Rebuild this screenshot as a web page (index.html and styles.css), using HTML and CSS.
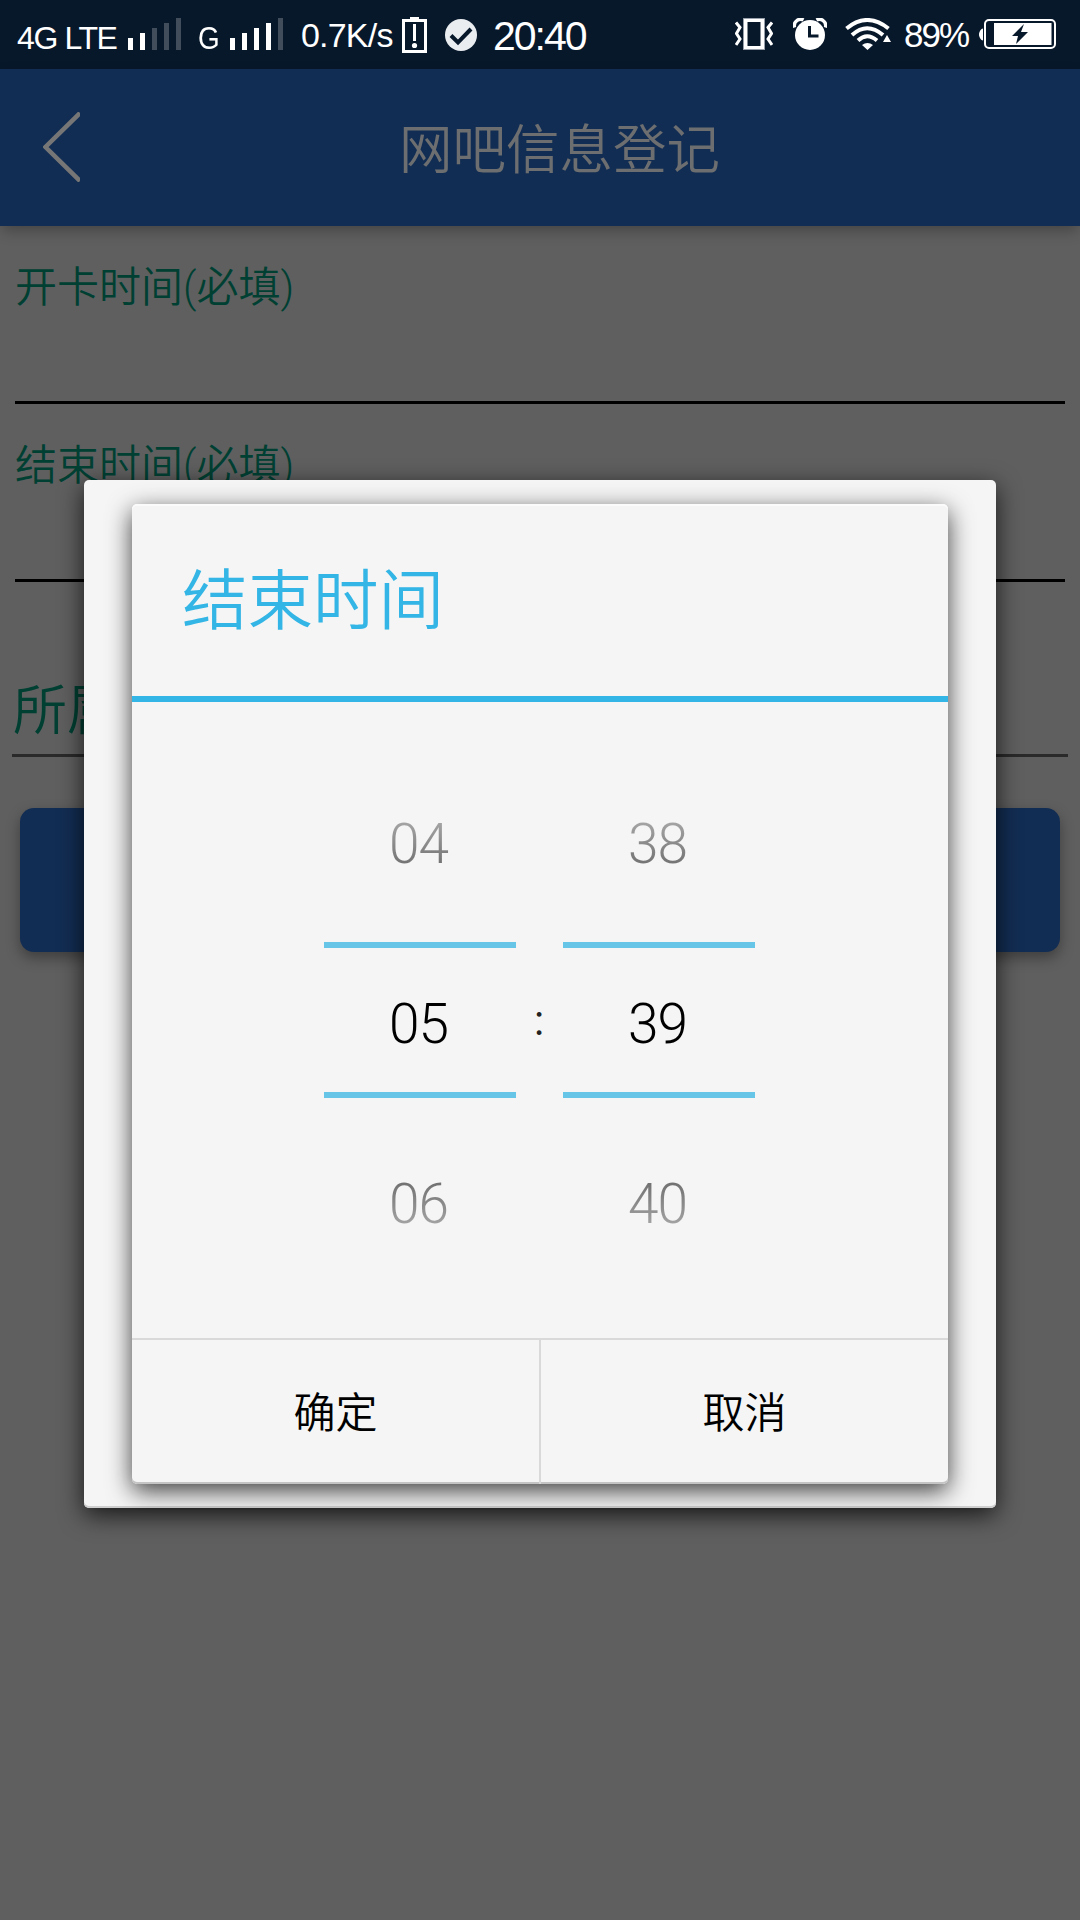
FILE: index.html
```html
<!DOCTYPE html>
<html lang="zh-CN">
<head>
<meta charset="utf-8">
<title>网吧信息登记</title>
<link rel="stylesheet" href="styles.css">
</head>
<body>
<div class="screen">
  <div class="status">
    <span class="net lte">4G LTE</span>
    <svg class="sig1" width="54" height="32" viewBox="0 0 54 32"><path fill="#fff" d="M0 20h5v12H0zM12 15h5v17h-5z"/><path fill="#414d5b" d="M24 10h5v22h-5zM36 5h5v27h-5zM48 0h5v32h-5z"/></svg>
    <span class="net gsm">G</span>
    <svg class="sig2" width="54" height="32" viewBox="0 0 54 32"><path fill="#fff" d="M0 20h5v12H0zM12 15h5v17h-5zM24 10h5v22h-5zM36 5h5v27h-5z"/><path fill="#414d5b" d="M48 0h5v32h-5z"/></svg>
    <span class="speed">0.7K/s</span>
    <svg class="sim" width="25" height="36" viewBox="0 0 25 36"><path fill="#fff" fill-rule="evenodd" d="M8 0h9v2h8v34H0V2h8zM3 5v28h19V5zM11 7h3v17h-3z"/><circle cx="12.500" cy="28.500" r="2.600" fill="#fff"/></svg>
    <svg class="check" width="32" height="32" viewBox="0 0 32 32"><circle cx="16" cy="16" r="16" fill="#e9edf0"/><path d="M6 16.500l7 7L26 10" fill="none" stroke="#08182b" stroke-width="4"/></svg>
    <span class="clock">20:40</span>
    <svg class="vibrate" width="38" height="32" viewBox="0 0 38 32"><path d="M10.500 2h17v28h-17z" fill="none" stroke="#fff" stroke-width="4"/><path d="M8.500.5h21v31h-21z" fill="none" stroke="#98a1ab"/><path d="M1 4.500L5 9.500 1.500 15.500 5 21 1 27M37 4.500L33 9.500 36.500 15.500 33 21 37 27" fill="none" stroke="#fff" stroke-width="3"/></svg>
    <svg class="alarm" width="34" height="32" viewBox="0 0 34 32"><circle cx="17" cy="17" r="15" fill="#fff"/><path d="M1.500 9.500C0 4 6 -.5 10.500 2M32.500 9.500C34 4 28 -.5 23.500 2" fill="none" stroke="#fff" stroke-width="3.500"/><path d="M16.500 8v10h9" fill="none" stroke="#08182b" stroke-width="3"/></svg>
    <svg class="wifi" width="46" height="32" viewBox="0 0 46 32"><g fill="none" stroke="#fff" stroke-width="4"><path d="M1.500 10.500Q22 -6.500 43.500 10.500"/><path d="M7 17Q22 3.500 38 17"/><path d="M13 22.500Q22 14 32 22.500"/></g><path fill="#fff" d="M17 27q5.500-4 11 0l-5.500 5zM42 17l4 7h-8z"/></svg>
    <span class="percent">89%</span>
    <svg class="battery" width="78" height="30" viewBox="0 0 78 30"><path fill="#fff" d="M4 9.500v12C2 21.500 0 18 0 15.500s2-6 4-6z"/><rect x="6" y="1" width="70" height="28" rx="4" fill="none" stroke="#fff" stroke-width="2"/><path fill="#fff" d="M15 4h57.500v22H15z"/><path fill="#08182b" d="M45 5L33 17h6l-2 8 12-12h-7z"/></svg>
  </div>

  <div class="header">
    <svg class="back" width="37" height="70" viewBox="0 0 37 70"><path d="M37 1L2.500 35 37 69" fill="none" stroke="#767676" stroke-width="4.500"/></svg>
    <h1 class="title">网吧信息登记</h1>
  </div>

  <div class="form">
    <div class="field">开卡时间(必填)</div>
    <div class="field">结束时间(必填)</div>
    <div class="owner">所属</div>
    <div class="submit"></div>
  </div>

  <div class="frame">
    <div class="dialog">
      <div class="dialog-title">结束时间</div>
      <div class="pickers">
        <div class="picker"><span class="num prev">04</span><span class="num now">05</span><span class="num next">06</span></div>
        <span class="colon">:</span>
        <div class="picker"><span class="num prev">38</span><span class="num now">39</span><span class="num next">40</span></div>
      </div>
      <div class="actions"><div class="action">确定</div><div class="action">取消</div></div>
    </div>
  </div>
</div>
</body>
</html>
```
FILE: styles.css
```css
* { box-sizing: border-box; }
body { margin: 0; }
.screen {
  position: relative;
  width: 1080px;
  height: 1920px;
  overflow: hidden;
  background: #5f5f5f;
  font-family: Roboto, "Noto Sans CJK SC", sans-serif;
  font-weight: 350;
}

/* status bar */
.status {
  display: flex;
  align-items: flex-start;
  height: 69px;
  background: #08182b;
  color: #fff;
  font-family: "Liberation Sans", sans-serif;
  font-weight: 400;
  white-space: nowrap;
}
.status svg { flex: none; }
.status span { flex: none; transform-origin: 0 50%; }
.net { font-size: 32px; line-height: 36px; margin-top: 20px; }
.lte { width: 111px; margin-left: 17px; letter-spacing: -1.4px; }
.sig1 { margin-top: 18px; }
.gsm { width: 32px; margin-left: 16px; transform: scaleX(.87); }
.sig2 { margin-top: 18px; }
.speed { width: 101px; margin-left: 17px; margin-top: 16px; font-size: 34px; line-height: 38px; letter-spacing: -.8px; }
.sim { margin-top: 17px; }
.check { margin: 19px 0 0 18px; }
.clock { width: 242px; margin: 14px 0 0 16px; font-size: 41px; line-height: 44px; letter-spacing: -2px; }
.vibrate { margin-top: 18px; }
.alarm { margin: 18px 0 0 20px; }
.wifi { margin: 18px 0 0 18px; }
.percent { width: 74px; margin: 16px 0 0 13px; font-size: 35px; line-height: 38px; letter-spacing: -2px; }
.battery { margin: 19px 0 0 1px; }

/* title bar */
.header {
  position: relative;
  display: flex;
  align-items: center;
  height: 157px;
  padding-left: 43px;
  background: #122d53;
  box-shadow: 0 6px 14px -2px rgba(0, 0, 0, .3);
}
.back { margin-bottom: 2px; }
.title { margin: 6px 0 0 319px; color: #6c6e70; font-size: 53.5px; line-height: 80px; font-weight: 350; }

/* form */
.form { display: flex; flex-direction: column; color: #004033; }
.field {
  height: 178px;
  margin: 0 15px;
  padding-top: 32px;
  border-bottom: 3px solid #000;
  font-size: 42px;
  line-height: 60px;
}
.owner {
  height: 175px;
  margin: 0 12px;
  padding: 91px 0 0 1px;
  border-bottom: 3px solid #2a2a2a;
  font-size: 54px;
  line-height: 78px;
}
.submit {
  height: 144px;
  margin: 51px 20px 0;
  border-radius: 14px;
  background: #122d53;
  box-shadow: 0 6px 14px rgba(0, 0, 0, .35);
}

/* time dialog */
.frame {
  position: absolute;
  left: 84px;
  top: 480px;
  width: 912px;
  height: 1028px;
  padding: 24px 48px;
  border-radius: 5px;
  background: #f5f5f5;
  box-shadow: 0 7px 24px rgba(0, 0, 0, .75), inset 0 -2px #d0d0d0;
}
.dialog {
  display: flex;
  flex-direction: column;
  height: 980px;
  border-radius: 5px;
  background: #f5f5f5;
  box-shadow: 0 7px 24px rgba(0, 0, 0, .75), inset 0 -2px #c4c4c4, inset 0 2px #fbfbfb;
}
.dialog-title {
  height: 198px;
  padding: 50px 0 0 50px;
  border-bottom: 6px solid #33b5e5;
  color: #33b5e5;
  font-size: 65.5px;
  line-height: 96px;
}
.pickers { display: flex; justify-content: center; height: 636px; padding: 60px 1px 0 0; margin-right: 1px; }
.picker { display: flex; flex-direction: column; align-items: center; width: 192px; }
.num { font-size: 55px; line-height: 64px; letter-spacing: -1px; padding-right: 2px; font-weight: 300; }
.prev, .next { color: transparent; -webkit-background-clip: text; background-clip: text; }
.prev { margin: 50px 0 66px; background-image: linear-gradient(#b0b0b0, #656565); }
.now {
  display: flex;
  align-items: center;
  justify-content: center;
  width: 192px;
  height: 156px;
  padding-top: 7px;
  border: solid #67c6e7;
  border-width: 6px 0;
  color: #000;
}
.next { margin-top: 74px; background-image: linear-gradient(#656565, #b0b0b0); }
.colon { width: 47px; padding-top: 234px; text-align: center; font-size: 42px; font-weight: 400; line-height: 50px; color: #222; }
.actions { display: flex; height: 146px; border-top: 2px solid #d9d9d9; }
.action { flex: 1; padding-top: 44px; text-align: center; color: #000; font-size: 42px; line-height: 60px; }
.action + .action { border-left: 2px solid #d9d9d9; }
```
